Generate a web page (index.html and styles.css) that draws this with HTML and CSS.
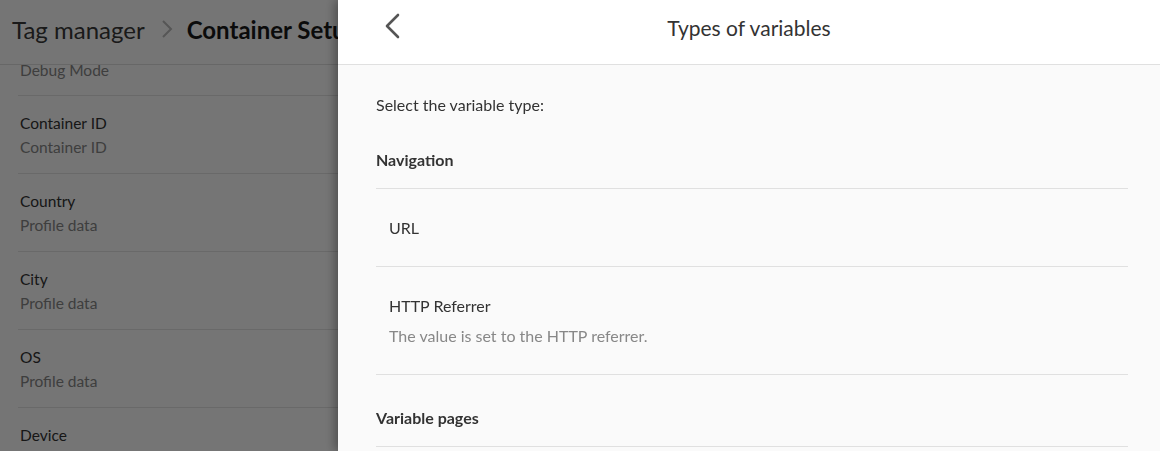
FILE: index.html
```html
<!DOCTYPE html>
<html lang="en">
<head>
  <meta charset="UTF-8" />
  <title>Tag manager | Container Setup</title>
  <link rel="stylesheet" href="styles.css">
</head>
<body>

<!-- Page behind the drawer -->
<div class="page">
  <header class="page-header">
    <span class="crumb">Tag manager</span>
    <svg class="crumb-sep" width="14" height="20" viewBox="0 0 14 20">
      <path d="M3 2 L11 10 L3 18" fill="none" stroke="currentColor" stroke-width="2"/>
    </svg>
    <span class="crumb current">Container Setup</span>
  </header>

  <div class="page-content">
    <ul class="field-list">
      <!-- list is scrolled: only the second line of the first row shows -->
      <li class="partial"><div class="field-sub">Debug Mode</div></li>
      <li><div class="field-label">Container ID</div><div class="field-sub">Container ID</div></li>
      <li><div class="field-label">Country</div><div class="field-sub">Profile data</div></li>
      <li><div class="field-label">City</div><div class="field-sub">Profile data</div></li>
      <li><div class="field-label">OS</div><div class="field-sub">Profile data</div></li>
      <li><div class="field-label">Device</div><div class="field-sub">Profile data</div></li>
    </ul>
  </div>
</div>

<div class="overlay"></div>

<!-- Drawer -->
<aside class="drawer">
  <div class="drawer-header">
    <button class="back-btn" aria-label="Back">
      <svg width="20" height="28" viewBox="0 0 20 28">
        <path d="M14 3 L3 14 L14 25" fill="none" stroke="currentColor" stroke-width="2.6" stroke-linecap="round" stroke-linejoin="round"/>
      </svg>
    </button>
    <h1 class="drawer-title">Types of variables</h1>
  </div>

  <div class="drawer-body">
    <p class="intro">Select the variable type:</p>

    <div class="group-title">Navigation</div>
    <div class="var-item">
      <div class="var-name">URL</div>
    </div>
    <div class="var-item">
      <div class="var-name">HTTP Referrer</div>
      <div class="var-desc">The value is set to the HTTP referrer.</div>
    </div>

    <div class="group-title">Variable pages</div>
  </div>
</aside>

</body>
</html>
```

FILE: styles.css
```css
* {
  box-sizing: border-box;
}

html, body {
  height: 100%;
}

body {
  margin: 0;
  font-family: Lato, "Open Sans", sans-serif;
  background: #fff;
  color: #333;
  overflow: hidden;
}

/* Page behind */
.page {
  height: 100%;
}

.page-header {
  height: 65px;
  display: flex;
  align-items: center;
  padding: 0 12px 6px;
  border-bottom: 1px solid #e0e0e0;
  font-size: 24px;
  white-space: nowrap;
  overflow: hidden;
}

.crumb {
  color: #3a3a3a;
}

.crumb.current {
  color: #1a1a1a;
  font-weight: bold;
}

.crumb-sep {
  color: #bbb;
  margin: 0 13px 0 15px;
}

.page-content {
  height: calc(100% - 65px);
  overflow: hidden;
}

.field-list {
  list-style: none;
  margin: -7px 0 0 18px;
  padding: 0;
}

.field-list li {
  padding: 15px 0 14px 2px;
  border-bottom: 1px solid #e4e4e4;
  font-size: 15.5px;
  line-height: 24px;
}

.field-list li.partial {
  padding-top: 0;
  padding-bottom: 13px;
}

.field-label {
  color: #333;
}

.field-sub {
  color: #888;
}

.overlay {
  position: fixed;
  inset: 0;
  background: rgba(0, 0, 0, 0.54);
}

/* Drawer */
.drawer {
  position: fixed;
  top: 0;
  right: 0;
  bottom: 0;
  width: 822px;
  background: #fafafa;
  box-shadow: -3px 0 10px rgba(0, 0, 0, 0.35);
}

.drawer-header {
  position: relative;
  height: 65px;
  background: #fff;
  border-bottom: 1px solid #e0e0e0;
  display: flex;
  align-items: center;
  justify-content: center;
}

.back-btn {
  position: absolute;
  left: 46px;
  top: 12px;
  padding: 0;
  border: none;
  background: none;
  color: #555;
  cursor: pointer;
}

.drawer-title {
  margin: 0 0 9px 0;
  font-size: 21px;
  font-weight: normal;
  color: #333;
}

.drawer-body {
  padding: 30px 32px 0 38px;
}

.intro {
  margin: 0 0 2px;
  font-size: 16px;
  line-height: 20px;
  color: #333;
}

.group-title {
  padding: 33px 0 18px;
  font-size: 16px;
  line-height: 20px;
  font-weight: bold;
  color: #333;
  border-bottom: 1px solid #e0e0e0;
}

.var-item {
  padding: 27px 13px 26px;
  border-bottom: 1px solid #e0e0e0;
  font-size: 16px;
  line-height: 24px;
}

.var-name {
  color: #333;
}

.var-desc {
  margin-top: 6px;
  color: #888;
}
```
